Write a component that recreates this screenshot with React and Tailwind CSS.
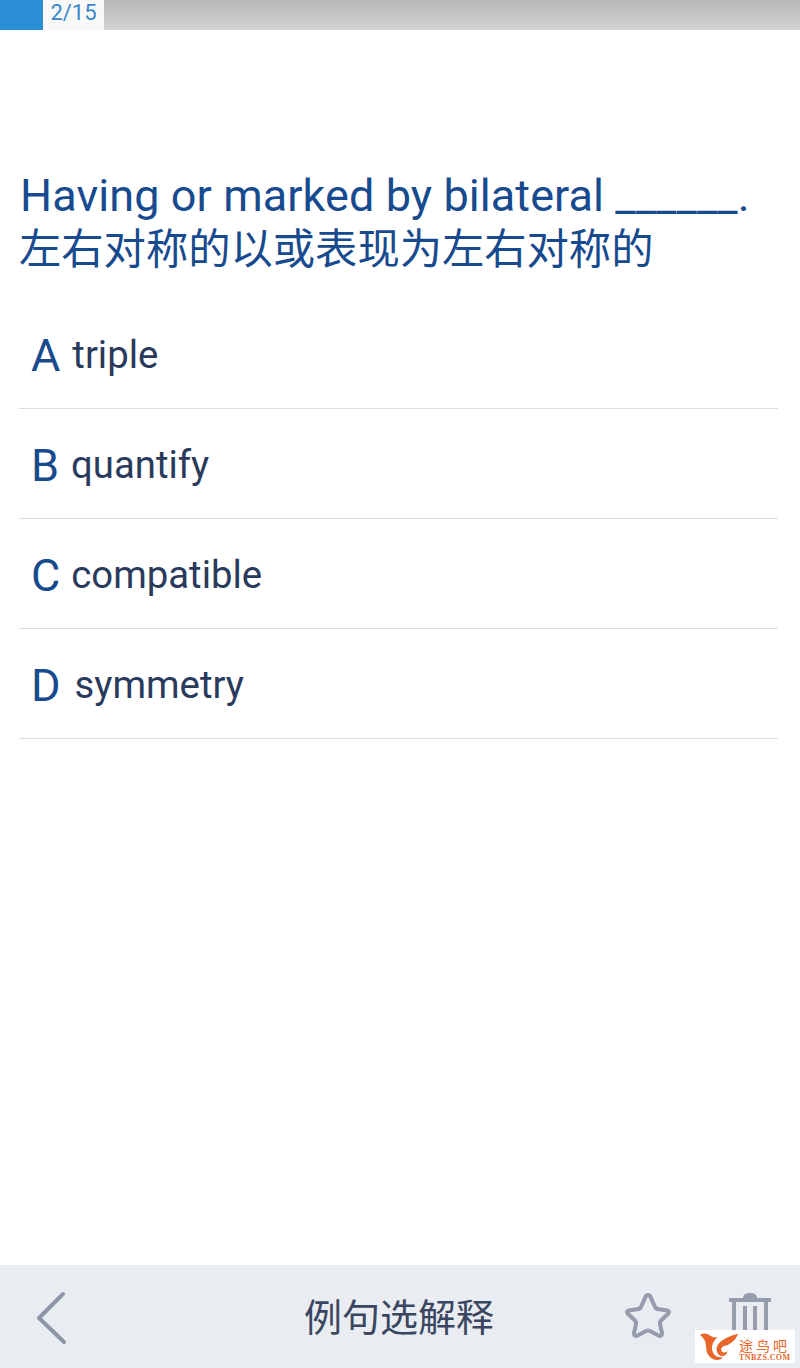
const font = { fontFamily: '"Roboto", "Noto Sans CJK SC", sans-serif' };

function Option({ letter, text, gap }) {
  return (
    <div className="h-[110px] border-b border-[#dcdfe1] flex items-center pl-[12px] pt-[3px]">
      <span className="text-[45px] leading-none text-[#174a8e]" style={{ marginRight: gap }}>{letter}</span>
      <span className="text-[38.3px] leading-none text-[#2a3a5c]">{text}</span>
    </div>
  );
}

export default function App() {
  return (
    <div className="relative w-[800px] h-[1368px] bg-white flex flex-col overflow-hidden" style={font}>
      <div className="h-[30px] flex shrink-0 bg-gradient-to-b from-[#b8b8b8] to-[#d4d4d4]">
        <div className="w-[43px] bg-[#2b8fd8]" />
        <div className="w-[61px] bg-[#f8f8f8] text-[#3a86c8] text-[22px] leading-[25px] text-center">2/15</div>
      </div>
      <div className="flex-1 pl-[19px] pr-[22px]">
        <div className="pt-[139px] pl-[1px] text-[#174a8e] whitespace-nowrap">
          <div className="text-[45px] leading-[54px] tracking-[0.08px]">Having or marked by bilateral ______.</div>
          <div className="-ml-[1px] text-[42.3px] leading-[53px]">左右对称的以或表现为左右对称的</div>
        </div>
        <div className="mt-[23px]">
          <Option letter="A" text="triple" gap={12} />
          <Option letter="B" text="quantify" gap={12} />
          <Option letter="C" text="compatible" gap={11} />
          <Option letter="D" text="symmetry" gap={14} />
        </div>
      </div>
      <div className="h-[103px] shrink-0 bg-[#e9edf2] flex items-center justify-between relative">
        <svg width="32" height="54" viewBox="0 0 32 54" className="ml-[36px] mb-[-2px]" fill="none" stroke="#8d96a6" strokeWidth="4" strokeLinecap="round" strokeLinejoin="round">
          <path d="M27 3 L3 27 L28 51" />
        </svg>
        <span className="absolute left-[304px] top-[29px] text-[38px] leading-[48px] text-[#3a4660]">例句选解释</span>
        <div className="flex items-center gap-[56px] mr-[29px]">
          <svg width="50" height="48" viewBox="0 0 50 48" className="mt-[-1px]" fill="none" stroke="#959dad" strokeWidth="4" strokeLinejoin="round">
            <path d="M25 3 Q27 3 28 6 L32 15 Q33 17 35 17 L44 18.5 Q47.5 19.5 45 22 L38 28.5 Q36.5 30 37 32 L39 41 Q39 45 35.500 43.500 L27 39 Q25 38 23 39 L14.500 43.500 Q11 45 11 41 L13 32 Q13.500 30 12 28.500 L5 22 Q2.500 19.500 6 18.500 L15 17 Q17 17 18 15 L22 6 Q23 3 25 3 Z" />
          </svg>
          <svg width="42" height="50" viewBox="0 0 42 50" fill="none" stroke="#959dad" strokeWidth="4">
            <path d="M0 8 H42" />
            <path d="M14 6 Q14 1 21 1 Q28 1 28 6 Z" fill="#959dad" stroke="none" />
            <path d="M5 8 V50 M37 8 V50 M16 14 V50 M26 14 V50" />
          </svg>
        </div>
      </div>
      <div className="absolute left-[695px] top-[1330px] w-[100px] h-[33px] bg-white flex items-center">
        <svg width="40" height="32" viewBox="30 20 120 96" className="ml-[5px] shrink-0">
          <path d="M30 32 Q45 22 62 35 Q72 42 82 38 Q72 50 68 58 Q62 75 72 90 Q80 100 100 100 Q85 110 70 105 Q48 95 48 65 Q48 45 30 32 Z" fill="#e8662a" />
          <path d="M145 28 Q110 35 88 55 Q75 70 82 85 Q86 95 100 95 Q112 92 112 80 Q105 88 96 82 Q90 72 100 66 Q130 60 145 28 Z" fill="#e8662a" />
        </svg>
        <div className="flex flex-col items-start gap-[2px] ml-[-1px] mt-[6px]">
          <span className="text-[14px] leading-[14px] tracking-[3px] text-[#e8662a] whitespace-nowrap" style={{ fontFamily: '"Noto Sans CJK SC", sans-serif' }}>途鸟吧</span>
          <span className="text-[8px] leading-[7px] font-bold tracking-[0.4px] text-[#e8662a] whitespace-nowrap" style={{ fontFamily: '"Liberation Serif", serif' }}>TNBZS.COM</span>
        </div>
      </div>
    </div>
  );
}
